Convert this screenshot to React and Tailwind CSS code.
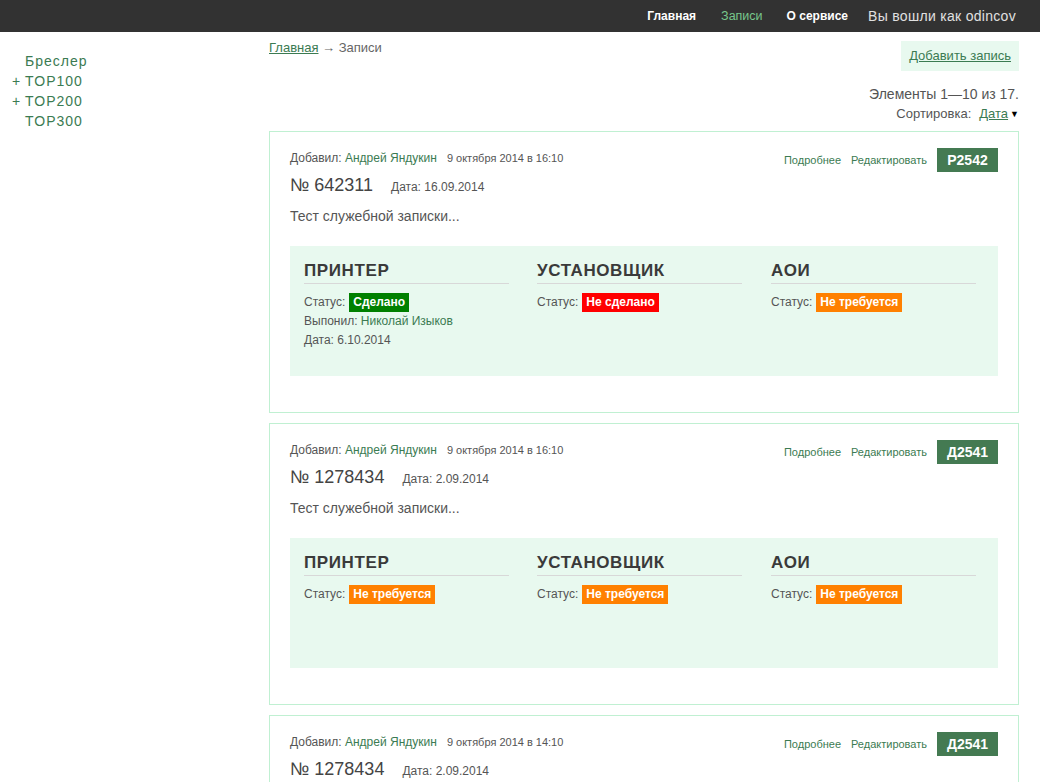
const font = { fontFamily: '"Liberation Sans", Arial, sans-serif' }

const records = [
  {
    code: 'Р2542',
    added: '9 октября 2014 в 16:10',
    num: '№ 642311',
    date: '16.09.2014',
    stages: [
      { title: 'Принтер', status: 'done', by: 'Николай Изыков', at: '6.10.2014' },
      { title: 'Установщик', status: 'notdone' },
      { title: 'АОИ', status: 'skip' },
    ],
  },
  {
    code: 'Д2541',
    added: '9 октября 2014 в 16:10',
    num: '№ 1278434',
    date: '2.09.2014',
    stages: [
      { title: 'Принтер', status: 'skip' },
      { title: 'Установщик', status: 'skip' },
      { title: 'АОИ', status: 'skip' },
    ],
  },
  {
    code: 'Д2541',
    added: '9 октября 2014 в 14:10',
    num: '№ 1278434',
    date: '2.09.2014',
    stages: [
      { title: 'Принтер', status: 'skip' },
      { title: 'Установщик', status: 'skip' },
      { title: 'АОИ', status: 'skip' },
    ],
  },
]

function StatusBadge({ status }) {
  if (status === 'done')
    return <span className="inline-block h-[19px] bg-[#008000] px-[4px] text-[12px] font-bold leading-[19px] text-white">Сделано</span>
  if (status === 'notdone')
    return <span className="inline-block h-[19px] bg-[#ff0000] px-[4px] text-[12px] font-bold leading-[19px] text-white">Не сделано</span>
  return <span className="inline-block h-[19px] bg-[#ff8000] px-[4px] text-[12px] font-bold leading-[19px] text-white">Не требуется</span>
}

function Stage({ stage }) {
  return (
    <div>
      <h3 className="w-[205px] border-b border-[#d8d8d8] text-[17px] font-bold uppercase leading-[24px] tracking-[0.6px] text-[#3a3a3a]">
        {stage.title}
      </h3>
      <div className="mt-[8px] flex items-center text-[12px] leading-[20px] text-[#555]">
        <span className="mr-[4px]">Статус:</span>
        <StatusBadge status={stage.status} />
      </div>
      {stage.by && (
        <div className="text-[12px] leading-[19px] text-[#555]">
          Выпонил: <a className="text-[#3b7b52]">{stage.by}</a>
        </div>
      )}
      {stage.at && <div className="text-[12px] leading-[19px] text-[#555]">Дата: {stage.at}</div>}
    </div>
  )
}

function RecordCard({ rec }) {
  return (
    <div className="mb-[10px] border border-[#c0f0d2] px-[20px] pt-[16px] pb-[36px]">
      <div className="flex items-start justify-between">
        <div>
          <div className="flex items-center text-[12px] leading-[20px] text-[#555]">
            Добавил:&nbsp;<a className="text-[#3b7b52]">Андрей Яндукин</a>
            <span className="ml-[10px] text-[11px]">{rec.added}</span>
          </div>
          <div className="mt-[6px] flex items-baseline leading-[22px]">
            <span className="text-[18px] text-[#444]">{rec.num}</span>
            <span className="ml-[18px] text-[12px] text-[#555]">Дата: {rec.date}</span>
          </div>
          <div className="mt-[8px] text-[14px] leading-[20px] text-[#555]">Тест служебной записки...</div>
        </div>
        <div className="flex items-center">
          <a className="text-[11px] text-[#3b7b52]">Подробнее</a>
          <a className="ml-[10px] text-[11px] text-[#3b7b52]">Редактировать</a>
          <span className="ml-[10px] flex h-[24px] w-[61px] items-center justify-center bg-[#447a52] text-[14px] font-bold text-white">
            {rec.code}
          </span>
        </div>
      </div>
      <div className="mt-[20px] grid h-[130px] grid-cols-[233px_234px_1fr] bg-[#e8f9ef] pl-[14px] pt-[13px]">
        {rec.stages.map((s, i) => (
          <Stage key={i} stage={s} />
        ))}
      </div>
    </div>
  )
}

export default function App() {
  return (
    <div className="h-[782px] overflow-hidden bg-white" style={font}>
      <header className="flex h-[32px] items-center justify-end bg-[#323232] pr-[24px]">
        <a className="text-[12px] font-bold text-white">Главная</a>
        <a className="ml-[25px] text-[12.5px] text-[#78c78c]">Записи</a>
        <a className="ml-[24px] text-[12px] font-bold text-white">О сервисе</a>
        <span className="ml-[20px] text-[14px] tracking-[0.3px] text-[#e0e0e0]">Вы вошли как odincov</span>
      </header>
      <div className="flex">
        <aside className="w-[269px] shrink-0 pl-[12px] pt-[19px] text-[14px] leading-[20px] tracking-[1px] text-[#3b7b52]">
          <div className="flex"><span className="w-[13px]"></span>Бреслер</div>
          <div className="flex"><span className="w-[13px]">+</span>TOP100</div>
          <div className="flex"><span className="w-[13px]">+</span>TOP200</div>
          <div className="flex"><span className="w-[13px]"></span>TOP300</div>
        </aside>
        <main className="w-[750px] pt-[9px]">
          <div className="flex items-start justify-between">
            <div className="text-[13px] leading-[14px] text-[#666]">
              <a className="text-[#3b7b52] underline">Главная</a> → Записи
            </div>
            <a className="flex h-[30px] items-center bg-[#e8f9ef] px-[8px] text-[13px] text-[#3b7b52] underline">Добавить запись</a>
          </div>
          <div className="mt-[14px] text-right text-[14px] leading-[18px] text-[#555]">Элементы 1—10 из 17.</div>
          <div className="mt-[2px] flex items-center justify-end text-[13px] leading-[18px] text-[#555]">
            Сортировка:
            <a className="ml-[8px] text-[#3b7b52] underline">Дата</a>
            <span className="ml-[2px] text-[9px] text-black">▼</span>
          </div>
          <div className="mt-[8px]">
            {records.map((r, i) => (
              <RecordCard key={i} rec={r} />
            ))}
          </div>
        </main>
      </div>
    </div>
  )
}
